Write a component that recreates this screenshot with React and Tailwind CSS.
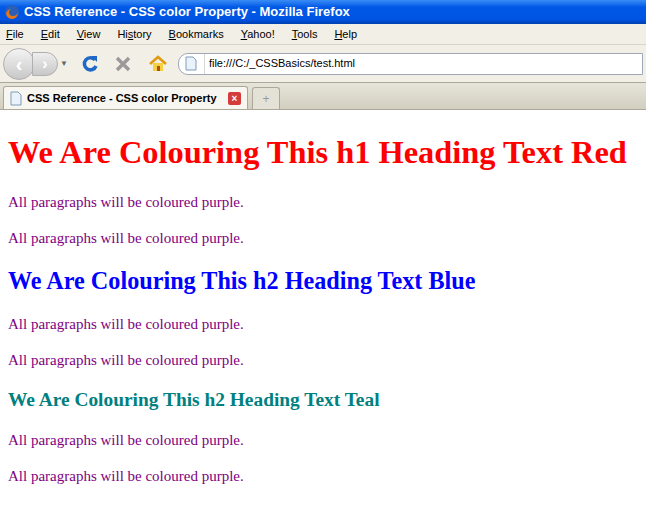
export default function App() {
  const serif = { fontFamily: '"Liberation Serif", serif' };
  const ui = { fontFamily: '"Liberation Sans", Arial, sans-serif' };
  return (
    <div className="w-[646px] h-[511px] bg-white overflow-hidden" style={ui}>
      <div className="h-[24px] flex items-center gap-1 px-1 text-white text-[13px] font-bold" style={{ background: "linear-gradient(#3a8cf5,#0058e6 30%,#0054e3 80%,#0040b0)" }}>
        <svg width="16" height="16" viewBox="0 0 16 16"><circle cx="8" cy="8" r="7" fill="#2a5fb5"/><path d="M2 9a6 6 0 0 0 12 0c-1 2-3 3-5 3-3 0-4-2-4-4 0-1 1-3 2-3-2 0-4 2-5 4z" fill="#e8751a"/></svg>
        <span>CSS Reference - CSS color Property - Mozilla Firefox</span>
      </div>
      <div className="h-[21px] flex items-center gap-[17px] px-[6px] text-[11px] text-black bg-[#f1efe6] border-b border-[#d8d4c6]">
        <span><u>F</u>ile</span><span><u>E</u>dit</span><span><u>V</u>iew</span><span>Hi<u>s</u>tory</span><span><u>B</u>ookmarks</span><span><u>Y</u>ahoo!</span><span><u>T</u>ools</span><span><u>H</u>elp</span>
      </div>
      <div className="h-[38px] flex items-center px-[3px] bg-[#f1efe6] border-b border-[#aca899]">
        <div className="flex items-center">
          <div className="w-[32px] h-[32px] rounded-full bg-gradient-to-b from-[#f4f4f4] to-[#c8c8c8] border border-[#b0b0b0] flex items-center justify-center text-white text-[20px] font-bold">‹</div>
          <div className="w-[26px] h-[24px] -ml-[3px] rounded-r-full bg-gradient-to-b from-[#eee] to-[#c8c8c8] border border-[#b0b0b0] flex items-center justify-center text-white text-[16px] font-bold">›</div>
          <span className="text-[8px] text-[#666] ml-[2px]">▼</span>
        </div>
        <svg className="ml-[12px]" width="20" height="20" viewBox="0 0 20 20"><path d="M15 6a6 6 0 1 0 1 6" fill="none" stroke="#2068c8" strokeWidth="3.5"/><path d="M11 2h6v6z" fill="#2068c8"/></svg>
        <svg className="ml-[14px]" width="18" height="18" viewBox="0 0 18 18"><path d="M3 3l12 12M15 3L3 15" stroke="#9a9a9a" strokeWidth="3.5"/></svg>
        <svg className="ml-[16px]" width="20" height="20" viewBox="0 0 20 20"><path d="M2 10L10 3l8 7" fill="none" stroke="#e09a10" strokeWidth="2.5"/><rect x="5" y="9" width="10" height="8" fill="#f5d040"/><rect x="9" y="12" width="3" height="5" fill="#b05010"/></svg>
        <div className="ml-[10px] flex-1 h-[22px] bg-white border border-[#9fa7b7] rounded-l-[10px] flex items-center text-[11px]">
          <div className="w-[26px] h-full flex items-center justify-center border-r border-[#d6d6d6]">
            <svg width="12" height="15" viewBox="0 0 12 15"><path d="M1 1h7l3 3v10H1z" fill="#eaf2fc" stroke="#7f9db9"/></svg>
          </div>
          <span className="ml-[4px]">file:///C:/_CSSBasics/test.html</span>
        </div>
      </div>
      <div className="h-[27px] flex items-end px-[3px] bg-gradient-to-b from-[#e7e5da] to-[#d2cfbf] border-b border-[#aca899]">
        <div className="h-[23px] w-[245px] bg-[#f7f6f1] border border-b-0 border-[#aca899] rounded-t-[3px] flex items-center gap-[5px] px-[6px] text-[11px] font-bold whitespace-nowrap">
          <svg width="12" height="15" viewBox="0 0 12 15"><path d="M1 1h7l3 3v10H1z" fill="#eaf2fc" stroke="#7f9db9"/></svg>
          <span className="flex-1">CSS Reference - CSS color Property</span>
          <span className="w-[13px] h-[13px] bg-[#d43c3c] text-white text-[10px] leading-[13px] text-center rounded-[2px]">×</span>
        </div>
        <div className="h-[22px] w-[28px] ml-[4px] border border-b-0 border-[#aca899] rounded-t-[3px] bg-[#e4e2d6] flex items-center justify-center text-[#999] text-[12px]">+</div>
      </div>
      <div className="px-[8px] pt-[24px]" style={serif}>
        <h1 className="text-[32.4px] font-bold text-[#ff0000] leading-[37px] whitespace-nowrap">We Are Colouring This h1 Heading Text Red</h1>
        <p className="text-[15px] text-[#800080] mt-[22px] leading-[18px]">All paragraphs will be coloured purple.</p>
        <p className="text-[15px] text-[#800080] mt-[18px] leading-[18px]">All paragraphs will be coloured purple.</p>
        <h2 className="text-[24.2px] font-bold text-[#0000ff] mt-[20px] leading-[28px]">We Are Colouring This h2 Heading Text Blue</h2>
        <p className="text-[15px] text-[#800080] mt-[20px] leading-[18px]">All paragraphs will be coloured purple.</p>
        <p className="text-[15px] text-[#800080] mt-[18px] leading-[18px]">All paragraphs will be coloured purple.</p>
        <h3 className="text-[19.4px] font-bold text-[#008080] mt-[20px] leading-[22px]">We Are Colouring This h2 Heading Text Teal</h3>
        <p className="text-[15px] text-[#800080] mt-[20px] leading-[18px]">All paragraphs will be coloured purple.</p>
        <p className="text-[15px] text-[#800080] mt-[18px] leading-[18px]">All paragraphs will be coloured purple.</p>
      </div>
    </div>
  );
}
